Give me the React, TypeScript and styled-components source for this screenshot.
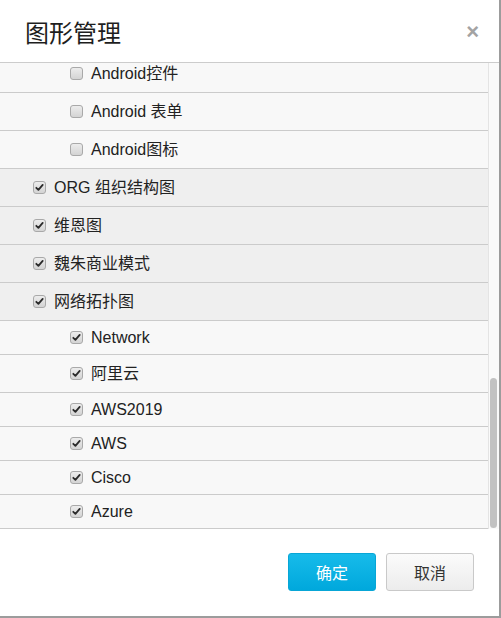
import React from "react";
import styled, { createGlobalStyle } from "styled-components";

const GlobalStyle = createGlobalStyle`
  html, body {
    margin: 0;
    padding: 0;
    background: #ffffff;
  }
  body {
    font-family: "Liberation Sans", "Noto Sans CJK SC", sans-serif;
    color: #222;
  }
  * { box-sizing: border-box; }
`;

const Modal = styled.div`
  width: 501px;
  height: 618px;
  background: #fff;
  border-right: 2px solid #9c9c9c;
  border-bottom: 2px solid #9c9c9c;
  display: flex;
  flex-direction: column;
`;

const Header = styled.div`
  height: 63px;
  flex: none;
  display: flex;
  align-items: center;
  justify-content: space-between;
  padding: 2px 20px 0 25px;
  border-bottom: 1px solid #cccccc;
`;

const Title = styled.h1`
  margin: 0;
  font-size: 24px;
  font-weight: normal;
  color: #1e1e1e;
  font-family: "Noto Sans CJK SC", "Liberation Sans", sans-serif;
  line-height: 30px;
`;

const Close = styled.span`
  font-family: "Liberation Sans", sans-serif;
  font-size: 22px;
  font-weight: bold;
  color: #a3a3a3;
  line-height: 22px;
  cursor: pointer;
`;

const ListArea = styled.div`
  height: 466px;
  flex: none;
  display: flex;
  background: #fafafa;
`;

const Rows = styled.div`
  flex: 1;
  min-width: 0;
  overflow: hidden;
  display: flex;
  flex-direction: column;
  justify-content: flex-end;
`;

const ScrollTrack = styled.div`
  width: 11px;
  flex: none;
  display: flex;
  flex-direction: column;
  justify-content: flex-end;
  background: #fafafa;
  border-left: 1px solid #e4e4e4;
  padding: 0 2px 1px 1px;
`;

const ScrollThumb = styled.div<{ $size: number }>`
  height: ${(p) => p.$size}px;
  border-radius: 4px;
  background: #c2c2c2;
`;

const Row = styled.div<{ $level: number; $tall: boolean }>`
  flex: none;
  height: ${(p) => (p.$tall ? 38 : 34)}px;
  display: flex;
  align-items: center;
  padding-left: ${(p) => (p.$level === 0 ? 33 : 70)}px;
  background: ${(p) => (p.$level === 0 ? "#efefef" : "#f8f8f8")};
  border-bottom: 1px solid #cbcbcb;
  font-size: 16px;
  color: #222;
`;

const Box = styled.span`
  width: 13px;
  height: 13px;
  flex: none;
  margin-right: 8px;
  border: 1px solid #a9a9a9;
  border-radius: 3px;
  background: linear-gradient(#ececec, #d4d4d4);
  display: flex;
  align-items: center;
  justify-content: center;
`;

const Label = styled.span`
  white-space: nowrap;
  line-height: 20px;
`;

const Footer = styled.div`
  flex: 1;
  display: flex;
  justify-content: flex-end;
  align-items: flex-start;
  gap: 10px;
  padding: 24px 25px 0 0;
`;

const Button = styled.button<{ $primary?: boolean }>`
  width: 88px;
  height: 38px;
  border-radius: 3px;
  font-size: 16px;
  font-family: "Noto Sans CJK SC", "Liberation Sans", sans-serif;
  cursor: pointer;
  border: 1px solid ${(p) => (p.$primary ? "#08a6d6" : "#c9c9c9")};
  color: ${(p) => (p.$primary ? "#ffffff" : "#333333")};
  background: ${(p) =>
    p.$primary
      ? "linear-gradient(#17bbea, #00a8dc)"
      : "linear-gradient(#fbfbfb, #ececec)"};
  padding: 0;
`;

type Item = { label: string; level: number; checked: boolean };

const items: Item[] = [
  { label: "Android控件", level: 1, checked: false },
  { label: "Android 表单", level: 1, checked: false },
  { label: "Android图标", level: 1, checked: false },
  { label: "ORG 组织结构图", level: 0, checked: true },
  { label: "维恩图", level: 0, checked: true },
  { label: "魏朱商业模式", level: 0, checked: true },
  { label: "网络拓扑图", level: 0, checked: true },
  { label: "Network", level: 1, checked: true },
  { label: "阿里云", level: 1, checked: true },
  { label: "AWS2019", level: 1, checked: true },
  { label: "AWS", level: 1, checked: true },
  { label: "Cisco", level: 1, checked: true },
  { label: "Azure", level: 1, checked: true },
];

const hasCjk = (s: string) => /[\u3000-\u9fff]/.test(s);

function Check({ checked }: { checked: boolean }) {
  return (
    <Box>
      {checked && (
        <svg width="9" height="9" viewBox="0 0 9 9">
          <path
            d="M1.3 4.8 L3.4 6.9 L7.7 1.9"
            fill="none"
            stroke="#2a2a2a"
            strokeWidth="1.8"
            strokeLinecap="round"
            strokeLinejoin="round"
          />
        </svg>
      )}
    </Box>
  );
}

export default function App() {
  return (
    <>
      <GlobalStyle />
      <Modal>
        <Header>
          <Title>图形管理</Title>
          <Close>×</Close>
        </Header>
        <ListArea>
          <Rows>
            {items.map((it) => (
              <Row key={it.label} $level={it.level} $tall={hasCjk(it.label)}>
                <Check checked={it.checked} />
                <Label>{it.label}</Label>
              </Row>
            ))}
          </Rows>
          <ScrollTrack>
            <ScrollThumb $size={150} />
          </ScrollTrack>
        </ListArea>
        <Footer>
          <Button $primary>确定</Button>
          <Button>取消</Button>
        </Footer>
      </Modal>
    </>
  );
}
